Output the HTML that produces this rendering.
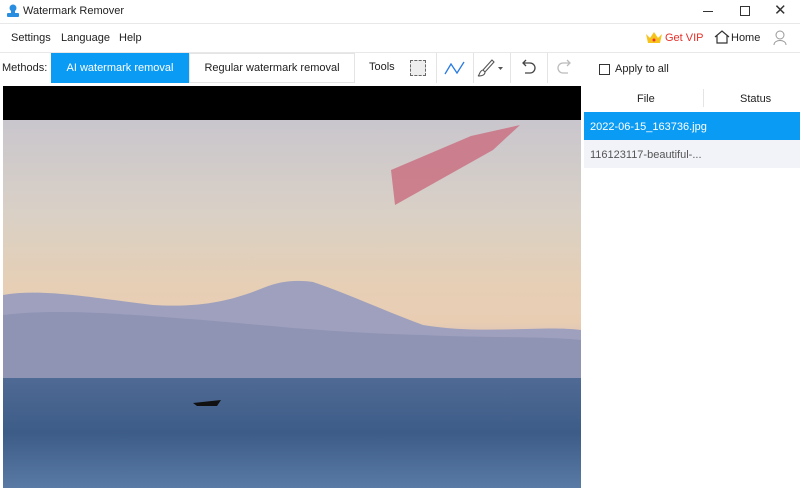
<!DOCTYPE html>
<html><head><meta charset="utf-8"><style>
*{margin:0;padding:0;box-sizing:border-box}
body{width:800px;height:488px;overflow:hidden;background:#fff;font-family:"Liberation Sans",sans-serif;font-size:11px;color:#222;position:relative}
.a{position:absolute}
.tool{position:absolute;top:53px;height:30px;border-left:1px solid #e4e4e4}
</style></head><body>
<svg class="a" style="left:6px;top:4px" width="14" height="14"><circle cx="7" cy="4" r="3.5" fill="#2a8ee0"/><rect x="5" y="6" width="4" height="4" fill="#2a8ee0"/><rect x="1" y="9" width="12" height="4" rx="1" fill="#2a8ee0"/></svg>
<div class="a" style="left:23px;top:5px;font-size:11px">Watermark Remover</div>
<div class="a" style="left:703px;top:11px;width:10px;height:1px;background:#333"></div>
<div class="a" style="left:740px;top:6px;width:10px;height:10px;border:1px solid #333"></div>
<div class="a" style="left:774px;top:1px;font-size:15px;color:#333">✕</div>
<div class="a" style="left:0;top:23px;width:800px;height:1px;background:#e8e8e8"></div>
<div class="a" style="left:11px;top:32px">Settings</div>
<div class="a" style="left:61px;top:32px">Language</div>
<div class="a" style="left:119px;top:32px">Help</div>
<svg class="a" style="left:645px;top:30px" width="18" height="15"><path d="M1 4 L5 8 L9 2 L13 8 L17 4 L15 13 L3 13Z" fill="#f6c21c"/><circle cx="9" cy="10" r="1.5" fill="#e33"/></svg>
<div class="a" style="left:665px;top:32px;color:#e8302a">Get VIP</div>
<svg class="a" style="left:714px;top:30px" width="16" height="14"><path d="M1 7 L8 1 L15 7 M3 5.5 V13 H13 V5.5" fill="none" stroke="#333" stroke-width="1.2"/></svg>
<div class="a" style="left:731px;top:32px">Home</div>
<svg class="a" style="left:773px;top:30px" width="14" height="15"><circle cx="7" cy="5" r="4" fill="none" stroke="#999"/><path d="M1 15 C1 9 13 9 13 15" fill="none" stroke="#999"/></svg>
<div class="a" style="left:0;top:52px;width:800px;height:1px;background:#e8e8e8"></div>
<div class="a" style="left:2px;top:62px">Methods:</div>
<div class="a" style="left:51px;top:53px;width:138px;height:30px;background:#0a9bf5;color:#fff;text-align:center;line-height:30px">AI watermark removal</div>
<div class="a" style="left:189px;top:53px;width:166px;height:30px;border:1px solid #e4e4e4;text-align:center;line-height:28px">Regular watermark removal</div>
<div class="a" style="left:369px;top:61px">Tools</div>
<div class="a" style="left:410px;top:60px;width:16px;height:16px;border:1px dashed #666;background:#eee"></div>
<div class="tool" style="left:436px"></div>
<svg class="a" style="left:444px;top:60px" width="22" height="16"><path d="M1 14 L7 4 L13 13 L20 2" fill="none" stroke="#2a7be0" stroke-width="1.3"/></svg>
<div class="tool" style="left:473px"></div>
<svg class="a" style="left:476px;top:58px" width="28" height="20"><path d="M16 2 L7 12 L9 14 L18 4Z M7 12 C3 13 4 17 2 18 C6 18 9 17 9 14" fill="none" stroke="#555" stroke-width="1.1"/><path d="M22 9 L27 9 L24.5 12Z" fill="#555"/></svg>
<div class="tool" style="left:510px"></div>
<svg class="a" style="left:518px;top:59px" width="20" height="18"><path d="M5 4 H12 A5 5 0 0 1 12 14 H7 M8 1 L5 4 L8 7" fill="none" stroke="#444" stroke-width="1.3"/></svg>
<div class="tool" style="left:547px"></div>
<svg class="a" style="left:555px;top:59px" width="20" height="18"><path d="M15 4 H8 A5 5 0 0 0 8 14 H13 M12 1 L15 4 L12 7" fill="none" stroke="#bbb" stroke-width="1.3"/></svg>
<div class="a" style="left:599px;top:64px;width:11px;height:11px;border:1px solid #333"></div>
<div class="a" style="left:615px;top:63px">Apply to all</div>
<div class="a" style="left:637px;top:93px">File</div>
<div class="a" style="left:703px;top:89px;width:1px;height:18px;background:#e4e4e4"></div>
<div class="a" style="left:740px;top:93px">Status</div>
<div class="a" style="left:584px;top:112px;width:216px;height:28px;background:#0a9bf5;color:#fff;padding:9px 0 0 6px">2022-06-15_163736.jpg</div>
<div class="a" style="left:584px;top:140px;width:216px;height:28px;background:#f1f3f8;color:#555;padding:9px 0 0 6px">116123117-beautiful-...</div>
<div class="a" style="left:3px;top:86px;width:578px;height:34px;background:#000"></div>
<div class="a" style="left:3px;top:120px;width:578px;height:368px;overflow:hidden;background:linear-gradient(#c9c6cd 0%,#d9d0c6 25%,#e6cfb5 45%,#e8cdb3 55%,#d6c0b6 62%)">
<svg width="578" height="368" style="position:absolute;left:0;top:0">
<path d="M0 175 C40 168 90 178 150 185 C200 188 230 180 260 168 C280 160 295 160 310 162 C340 172 380 190 420 205 C480 215 540 205 578 210 L578 260 L0 260Z" fill="#9fa0bd"/>
<path d="M0 195 C60 188 130 195 200 200 C260 205 330 213 420 215 C480 218 540 216 578 220 L578 260 L0 260Z" fill="#8f94b5"/>
<path d="M388 50 L468 16 L517 5 L490 30 L392 85Z" fill="#c96c7e" opacity="0.8"/>
<rect x="0" y="258" width="578" height="110" fill="url(#s)"/>
<path d="M190 283 L218 280 L214 286 L194 286Z" fill="#111"/>
<defs><linearGradient id="s" x1="0" y1="0" x2="0" y2="1"><stop offset="0" stop-color="#4f6a94"/><stop offset="0.5" stop-color="#3d5c88"/><stop offset="1" stop-color="#5a7aa6"/></linearGradient></defs>
</svg></div>
</body></html>
